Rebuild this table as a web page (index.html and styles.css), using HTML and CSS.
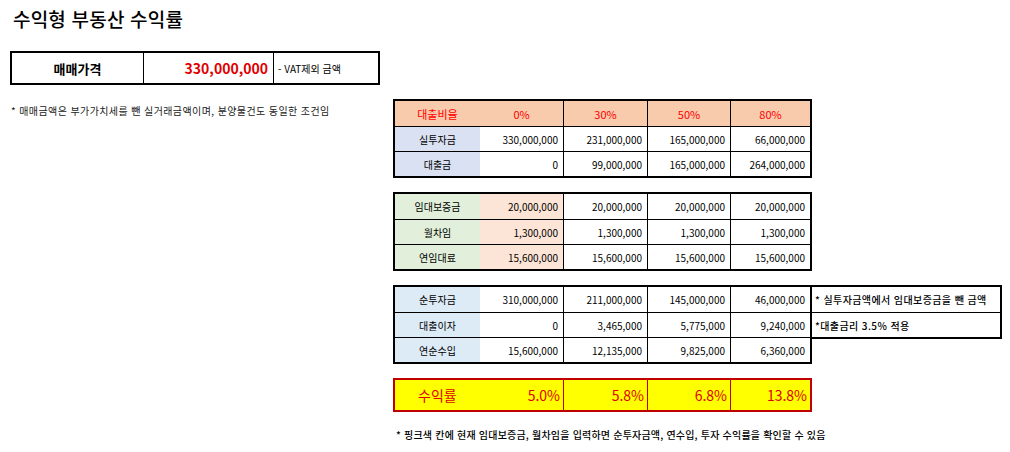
FILE: index.html
```html
<!DOCTYPE html>
<html lang="ko">
<head>
<meta charset="utf-8">
<title>수익형 부동산 수익률</title>
<link rel="stylesheet" href="styles.css">
</head>
<body>
<h1 class="title">수익형 부동산 수익률</h1>

<div class="price">
  <div class="price-label">매매가격</div>
  <div class="price-value">330,000,000</div>
  <div class="price-note">- VAT제외 금액</div>
</div>

<div class="main">
  <div class="left-note">* 매매금액은 부가가치세를 뺀 실거래금액이며, 분양물건도 동일한 조건임</div>

  <div class="right">
    <div class="sheet">
      <div class="row head">
        <div class="cell lab">대출비율</div>
        <div class="cell ctr">0%</div>
        <div class="cell ctr vl">30%</div>
        <div class="cell ctr vl">50%</div>
        <div class="cell ctr vl">80%</div>
      </div>
      <div class="row hl">
        <div class="cell lab blue">실투자금</div>
        <div class="cell num">330,000,000</div>
        <div class="cell num vl">231,000,000</div>
        <div class="cell num vl">165,000,000</div>
        <div class="cell num vl">66,000,000</div>
      </div>
      <div class="row hl">
        <div class="cell lab blue">대출금</div>
        <div class="cell num">0</div>
        <div class="cell num vl">99,000,000</div>
        <div class="cell num vl">165,000,000</div>
        <div class="cell num vl">264,000,000</div>
      </div>
    </div>

    <div class="sheet">
      <div class="row">
        <div class="cell lab green">임대보증금</div>
        <div class="cell num pink">20,000,000</div>
        <div class="cell num vl">20,000,000</div>
        <div class="cell num vl">20,000,000</div>
        <div class="cell num vl">20,000,000</div>
      </div>
      <div class="row hl">
        <div class="cell lab green">월차임</div>
        <div class="cell num pink">1,300,000</div>
        <div class="cell num vl">1,300,000</div>
        <div class="cell num vl">1,300,000</div>
        <div class="cell num vl">1,300,000</div>
      </div>
      <div class="row hl">
        <div class="cell lab green">연임대료</div>
        <div class="cell num pink">15,600,000</div>
        <div class="cell num vl">15,600,000</div>
        <div class="cell num vl">15,600,000</div>
        <div class="cell num vl">15,600,000</div>
      </div>
    </div>

    <div class="with-notes">
      <div class="sheet">
        <div class="row">
          <div class="cell lab sky">순투자금</div>
          <div class="cell num">310,000,000</div>
          <div class="cell num vl">211,000,000</div>
          <div class="cell num vl">145,000,000</div>
          <div class="cell num vl">46,000,000</div>
        </div>
        <div class="row hl">
          <div class="cell lab sky">대출이자</div>
          <div class="cell num">0</div>
          <div class="cell num vl">3,465,000</div>
          <div class="cell num vl">5,775,000</div>
          <div class="cell num vl">9,240,000</div>
        </div>
        <div class="row hl">
          <div class="cell lab sky">연순수입</div>
          <div class="cell num">15,600,000</div>
          <div class="cell num vl">12,135,000</div>
          <div class="cell num vl">9,825,000</div>
          <div class="cell num vl">6,360,000</div>
        </div>
      </div>
      <div class="notes">
        <div class="note-row">* 실투자금액에서 임대보증금을 뺀 금액</div>
        <div class="note-row hl">*대출금리 3.5% 적용</div>
      </div>
    </div>

    <div class="yield">
      <div class="ycell ylabel"><span>수익률</span><span>5.0%</span></div>
      <div class="ycell yl">5.8%</div>
      <div class="ycell yl">6.8%</div>
      <div class="ycell yl">13.8%</div>
    </div>

    <div class="bottom-note">* 핑크색 칸에 현재 임대보증금, 월차임을 입력하면 순투자금액, 연수입, 투자 수익률을 확인할 수 있음</div>
  </div>
</div>
</body>
</html>
```

FILE: styles.css
```css
* { box-sizing: border-box; }

body {
  margin: 0;
  background: #fff;
  color: #000;
  font-family: "Noto Sans CJK KR", "Noto Sans", sans-serif;
}

.title {
  margin: 0;
  padding: 8px 0 0 13px;
  font-size: 19px;
  line-height: 21px;
  font-weight: 500;
  letter-spacing: 0.2px;
}

.price {
  margin: 22px 0 0 10px;
  width: 370px;
  height: 34px;
  border: 2px solid #000;
  display: grid;
  grid-template-columns: 131px 130px 105px;
}
.price > div { display: flex; align-items: center; }
.price-label {
  justify-content: center;
  font-size: 13px;
  font-weight: 700;
}
.price-value {
  border-left: 1px solid #000;
  justify-content: flex-end;
  padding-right: 5px;
  font-size: 14px;
  font-weight: 700;
  color: #e00000;
}
.price-note {
  border-left: 1px solid #000;
  padding-left: 4px;
  font-size: 10px;
}

.main {
  display: flex;
  margin-top: 14px;
}
.left-note {
  width: 393px;
  padding: 5px 0 0 11px;
  font-size: 10px;
  line-height: 14px;
  letter-spacing: 0.4px;
  color: #222;
}

.right { display: flex; flex-direction: column; }

.sheet {
  width: 419px;
  border: 2px solid #000;
  margin-bottom: 14px;
}
.with-notes { display: flex; align-items: flex-start; margin-bottom: 14px; }
.with-notes .sheet { margin-bottom: 0; }

.row {
  display: grid;
  grid-template-columns: 85px 83px 84px 83px 80px;
  height: 25px;
}
.row.hl { border-top: 1px solid #000; height: 25px; }
.row.hl .cell { height: 24px; }

.cell {
  display: flex;
  align-items: center;
  height: 25px;
  font-size: 10px;
}
.cell.vl { border-left: 1px solid #000; }
.cell.lab { justify-content: center; }
.cell.ctr { justify-content: center; }
.cell.num { justify-content: flex-end; padding-right: 5px; }

.head { background: #f8cbad; color: #ff0000; }
.head .cell { font-size: 11px; }
.blue { background: #d9e1f2; }
.green { background: #e2efda; }
.pink { background: #fce4d6; }
.sky { background: #ddebf7; }

.notes {
  width: 190px;
  border: 2px solid #000;
  border-left: 0;
}
.note-row {
  height: 25px;
  display: flex;
  align-items: center;
  padding-left: 3px;
  font-size: 10px;
  font-weight: 500;
  letter-spacing: 0.4px;
}
.note-row.hl { border-top: 1px solid #000; }

.yield {
  width: 419px;
  height: 34px;
  border: 2px solid #c00000;
  background: #ffff00;
  display: grid;
  grid-template-columns: 168px 84px 83px 80px;
  color: #e00000;
}
.ycell {
  display: flex;
  align-items: center;
  justify-content: flex-end;
  padding-right: 3px;
  font-size: 14px;
}
.ycell.yl { border-left: 1px solid #c00000; }
.ycell.ylabel { justify-content: space-between; padding-left: 23px; }

.bottom-note {
  margin-top: 16px;
  padding-left: 3px;
  font-size: 10px;
  line-height: 14px;
  font-weight: 500;
  letter-spacing: 0.2px;
}
```
